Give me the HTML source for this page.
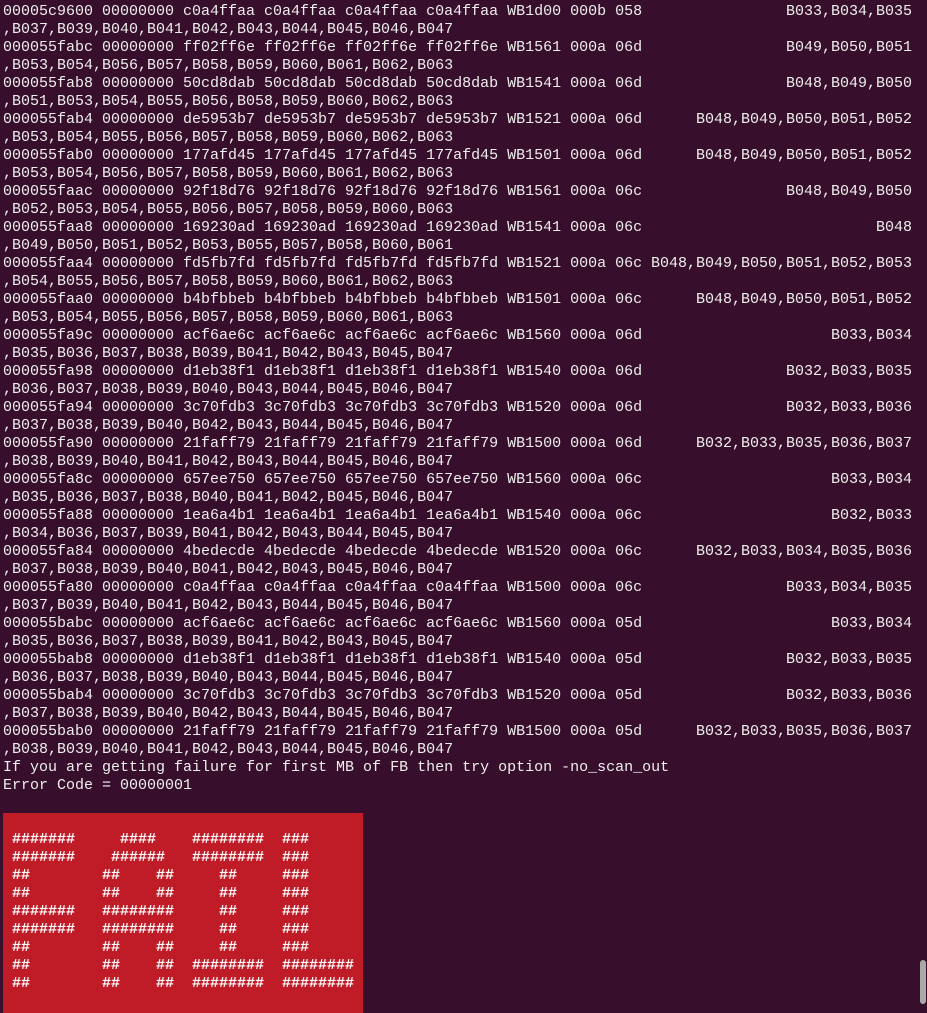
<!DOCTYPE html>
<html><head><meta charset="utf-8"><style>
html,body{margin:0;padding:0;}
body{width:927px;height:1008px;overflow:hidden;background:#370f2c;position:relative;font-family:"Liberation Mono","DejaVu Sans Mono",monospace;font-size:15px;color:#eeeeec;}
#t{position:absolute;left:3px;top:3px;width:909px;}
.l{height:18px;line-height:18px;white-space:pre;}
.f{display:flex;justify-content:space-between;}
#box{position:absolute;left:3px;top:813px;width:360px;height:200px;background:#c01c28;}
#box pre{margin:0;padding-top:18px;font-family:inherit;font-size:15px;line-height:18px;font-weight:bold;color:#fff;}
#sb{position:absolute;left:920px;top:960px;width:6px;height:44px;border-radius:3px;background:#a9a9a9;}
</style></head><body>
<div id="t">
<div class="l f"><span>00005c9600 00000000 c0a4ffaa c0a4ffaa c0a4ffaa c0a4ffaa WB1d00 000b 058</span><span>B033,B034,B035</span></div>
<div class="l">,B037,B039,B040,B041,B042,B043,B044,B045,B046,B047</div>
<div class="l f"><span>000055fabc 00000000 ff02ff6e ff02ff6e ff02ff6e ff02ff6e WB1561 000a 06d</span><span>B049,B050,B051</span></div>
<div class="l">,B053,B054,B056,B057,B058,B059,B060,B061,B062,B063</div>
<div class="l f"><span>000055fab8 00000000 50cd8dab 50cd8dab 50cd8dab 50cd8dab WB1541 000a 06d</span><span>B048,B049,B050</span></div>
<div class="l">,B051,B053,B054,B055,B056,B058,B059,B060,B062,B063</div>
<div class="l f"><span>000055fab4 00000000 de5953b7 de5953b7 de5953b7 de5953b7 WB1521 000a 06d</span><span>B048,B049,B050,B051,B052</span></div>
<div class="l">,B053,B054,B055,B056,B057,B058,B059,B060,B062,B063</div>
<div class="l f"><span>000055fab0 00000000 177afd45 177afd45 177afd45 177afd45 WB1501 000a 06d</span><span>B048,B049,B050,B051,B052</span></div>
<div class="l">,B053,B054,B056,B057,B058,B059,B060,B061,B062,B063</div>
<div class="l f"><span>000055faac 00000000 92f18d76 92f18d76 92f18d76 92f18d76 WB1561 000a 06c</span><span>B048,B049,B050</span></div>
<div class="l">,B052,B053,B054,B055,B056,B057,B058,B059,B060,B063</div>
<div class="l f"><span>000055faa8 00000000 169230ad 169230ad 169230ad 169230ad WB1541 000a 06c</span><span>B048</span></div>
<div class="l">,B049,B050,B051,B052,B053,B055,B057,B058,B060,B061</div>
<div class="l f"><span>000055faa4 00000000 fd5fb7fd fd5fb7fd fd5fb7fd fd5fb7fd WB1521 000a 06c</span><span>B048,B049,B050,B051,B052,B053</span></div>
<div class="l">,B054,B055,B056,B057,B058,B059,B060,B061,B062,B063</div>
<div class="l f"><span>000055faa0 00000000 b4bfbbeb b4bfbbeb b4bfbbeb b4bfbbeb WB1501 000a 06c</span><span>B048,B049,B050,B051,B052</span></div>
<div class="l">,B053,B054,B055,B056,B057,B058,B059,B060,B061,B063</div>
<div class="l f"><span>000055fa9c 00000000 acf6ae6c acf6ae6c acf6ae6c acf6ae6c WB1560 000a 06d</span><span>B033,B034</span></div>
<div class="l">,B035,B036,B037,B038,B039,B041,B042,B043,B045,B047</div>
<div class="l f"><span>000055fa98 00000000 d1eb38f1 d1eb38f1 d1eb38f1 d1eb38f1 WB1540 000a 06d</span><span>B032,B033,B035</span></div>
<div class="l">,B036,B037,B038,B039,B040,B043,B044,B045,B046,B047</div>
<div class="l f"><span>000055fa94 00000000 3c70fdb3 3c70fdb3 3c70fdb3 3c70fdb3 WB1520 000a 06d</span><span>B032,B033,B036</span></div>
<div class="l">,B037,B038,B039,B040,B042,B043,B044,B045,B046,B047</div>
<div class="l f"><span>000055fa90 00000000 21faff79 21faff79 21faff79 21faff79 WB1500 000a 06d</span><span>B032,B033,B035,B036,B037</span></div>
<div class="l">,B038,B039,B040,B041,B042,B043,B044,B045,B046,B047</div>
<div class="l f"><span>000055fa8c 00000000 657ee750 657ee750 657ee750 657ee750 WB1560 000a 06c</span><span>B033,B034</span></div>
<div class="l">,B035,B036,B037,B038,B040,B041,B042,B045,B046,B047</div>
<div class="l f"><span>000055fa88 00000000 1ea6a4b1 1ea6a4b1 1ea6a4b1 1ea6a4b1 WB1540 000a 06c</span><span>B032,B033</span></div>
<div class="l">,B034,B036,B037,B039,B041,B042,B043,B044,B045,B047</div>
<div class="l f"><span>000055fa84 00000000 4bedecde 4bedecde 4bedecde 4bedecde WB1520 000a 06c</span><span>B032,B033,B034,B035,B036</span></div>
<div class="l">,B037,B038,B039,B040,B041,B042,B043,B045,B046,B047</div>
<div class="l f"><span>000055fa80 00000000 c0a4ffaa c0a4ffaa c0a4ffaa c0a4ffaa WB1500 000a 06c</span><span>B033,B034,B035</span></div>
<div class="l">,B037,B039,B040,B041,B042,B043,B044,B045,B046,B047</div>
<div class="l f"><span>000055babc 00000000 acf6ae6c acf6ae6c acf6ae6c acf6ae6c WB1560 000a 05d</span><span>B033,B034</span></div>
<div class="l">,B035,B036,B037,B038,B039,B041,B042,B043,B045,B047</div>
<div class="l f"><span>000055bab8 00000000 d1eb38f1 d1eb38f1 d1eb38f1 d1eb38f1 WB1540 000a 05d</span><span>B032,B033,B035</span></div>
<div class="l">,B036,B037,B038,B039,B040,B043,B044,B045,B046,B047</div>
<div class="l f"><span>000055bab4 00000000 3c70fdb3 3c70fdb3 3c70fdb3 3c70fdb3 WB1520 000a 05d</span><span>B032,B033,B036</span></div>
<div class="l">,B037,B038,B039,B040,B042,B043,B044,B045,B046,B047</div>
<div class="l f"><span>000055bab0 00000000 21faff79 21faff79 21faff79 21faff79 WB1500 000a 05d</span><span>B032,B033,B035,B036,B037</span></div>
<div class="l">,B038,B039,B040,B041,B042,B043,B044,B045,B046,B047</div>
<div class="l">If you are getting failure for first MB of FB then try option -no_scan_out</div>
<div class="l">Error Code = 00000001</div>
</div>
<div id="box"><pre> #######     ####    ########  ###
 #######    ######   ########  ###
 ##        ##    ##     ##     ###
 ##        ##    ##     ##     ###
 #######   ########     ##     ###
 #######   ########     ##     ###
 ##        ##    ##     ##     ###
 ##        ##    ##  ########  ########
 ##        ##    ##  ########  ########</pre></div>
<div id="sb"></div>
</body></html>
